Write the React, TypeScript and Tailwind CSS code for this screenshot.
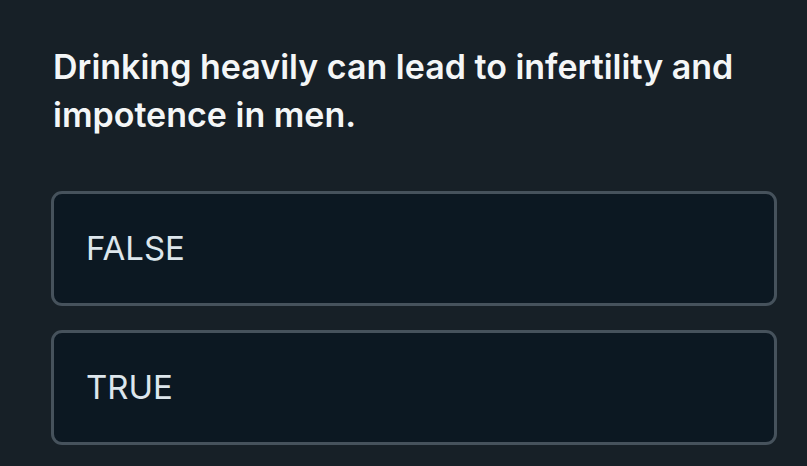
export default function App() {
  const options = ['FALSE', 'TRUE'];

  return (
    <div className="min-h-[466px] w-full bg-[#172027] pl-[51px] pr-[30px] pt-[43px]" style={{ fontFamily: 'Inter, "Noto Sans", sans-serif' }}>
      <h1 className="pl-[2px] text-[34px] font-semibold leading-[48px] text-[#f4f6f7]">
        Drinking heavily can lead to infertility and impotence in men.
      </h1>

      <div className="mt-[52px] flex flex-col gap-6">
        {options.map((label) => (
          <button
            key={label}
            className="flex h-[115px] items-center rounded-[11px] border-[3px] border-[#46525c] bg-[#0c1822] pl-[32px] text-left"
          >
            <span className="text-[33px] font-normal text-[#dde6ec]">{label}</span>
          </button>
        ))}
      </div>
    </div>
  );
}
